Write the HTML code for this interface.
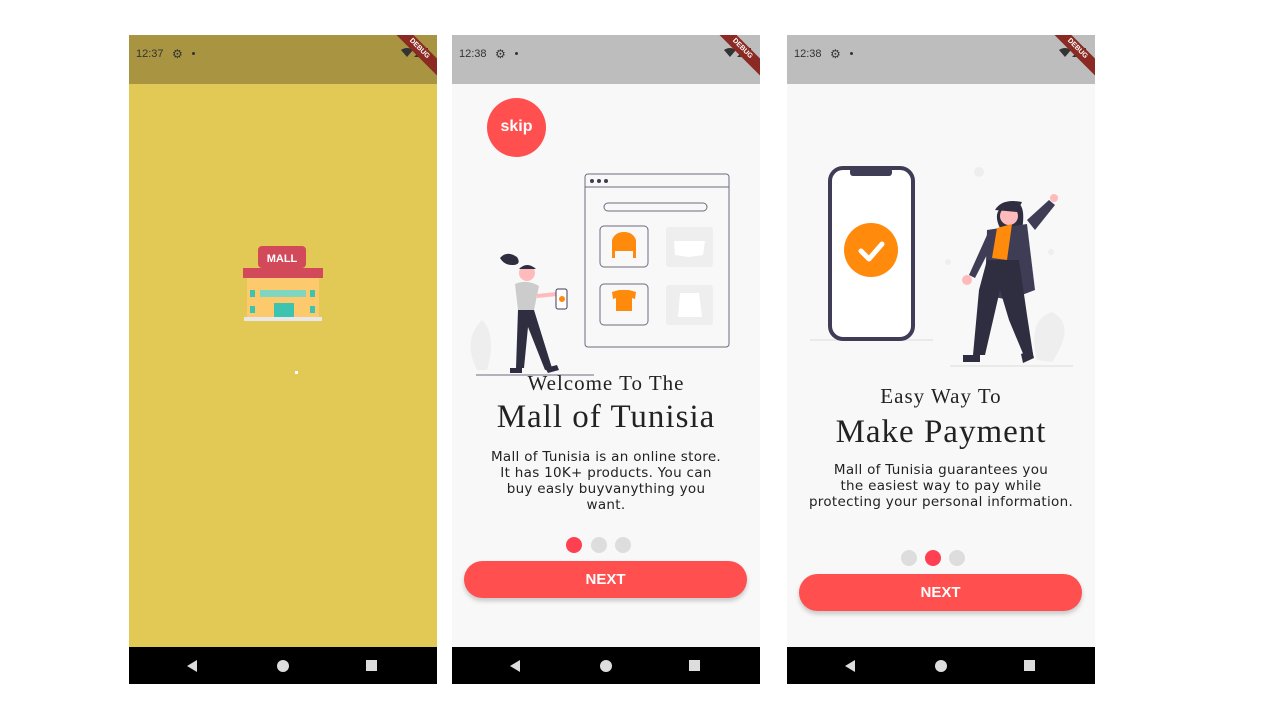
<!DOCTYPE html>
<html><head><meta charset="utf-8"><style>
*{margin:0;padding:0;box-sizing:border-box}
body{width:1280px;height:720px;background:#fff;position:relative;overflow:hidden;font-family:"Liberation Sans",sans-serif}
.ph{position:absolute;top:35px;width:308px;height:649px;background:#f8f8f8;overflow:hidden}
.sb{position:absolute;left:0;top:0;width:100%;height:49px;background:#bdbdbd;color:#333;font-size:11px}
.sb .t{position:absolute;left:7px;top:13px}
.sb .g{position:absolute;left:43px;top:12px;font-size:12px}
.sb .d{position:absolute;left:63px;top:17px;width:3px;height:3px;border-radius:50%;background:#333}
.sb .ic{position:absolute;right:8px;top:13px;width:28px;height:10px}
.rib{position:absolute;right:-22px;top:8px;width:80px;height:12px;background:#8b2a23;transform:rotate(45deg);color:#fff;font-size:7px;font-weight:bold;text-align:center;line-height:12px}
.nb{position:absolute;left:0;bottom:0;width:100%;height:37px;background:#000}
.nb .a{position:absolute;left:58px;top:13px;width:0;height:0;border-top:6px solid transparent;border-bottom:6px solid transparent;border-right:10px solid #ddd}
.nb .c{position:absolute;left:148px;top:13px;width:12px;height:12px;border-radius:50%;background:#ddd}
.nb .s{position:absolute;left:237px;top:13px;width:11px;height:11px;background:#ddd}
.ser{font-family:"Liberation Serif",serif;color:#222;text-align:center;position:absolute;left:0;width:100%;letter-spacing:1px}
.body{font-family:"DejaVu Sans",sans-serif;font-size:13.5px;color:#222;text-align:center;position:absolute;left:0;width:100%;line-height:16px;letter-spacing:0.3px}
.dot{position:absolute;width:16px;height:16px;border-radius:50%;background:#ddd}
.btn{position:absolute;left:12px;width:283px;height:37px;border-radius:19px;background:#ff4f4f;color:#fff;font-weight:bold;font-size:15px;text-align:center;line-height:37px;box-shadow:0 3px 5px rgba(0,0,0,.2)}
</style></head><body>

<!-- phone 1 -->
<div class="ph" style="left:129px;background:#e2c955">
 <div class="sb" style="background:#a99541"><span class="t">12:37</span><span class="g">⚙</span><span class="d"></span>
 <svg class="ic" viewBox="0 0 28 10"><path d="M0 2 Q6 -2 12 2 L6 9Z" fill="#333"/><path d="M13 9 L22 0 L22 9Z" fill="#333"/><rect x="23" y="0" width="4" height="10" fill="#333"/></svg></div>
 <div class="rib">DEBUG</div>
 <svg style="position:absolute;left:113px;top:208px" width="82" height="80" viewBox="0 0 82 80">
  <rect x="16" y="3" width="48" height="22" rx="4" fill="#d24a5a"/>
  <text x="40" y="19" font-family="Liberation Sans" font-weight="bold" font-size="11" fill="#fff" text-anchor="middle">MALL</text>
  <rect x="5" y="33" width="72" height="41" fill="#fcc96c"/>
  <rect x="1" y="25" width="80" height="10" fill="#d24a5a"/>
  <rect x="18" y="47" width="46" height="7" fill="#7fd6c0"/>
  <rect x="8" y="47" width="5" height="7" fill="#3cc4b0"/><rect x="68" y="47" width="5" height="7" fill="#3cc4b0"/>
  <rect x="8" y="63" width="5" height="7" fill="#3cc4b0"/><rect x="68" y="63" width="5" height="7" fill="#3cc4b0"/>
  <rect x="32" y="60" width="20" height="14" fill="#3cc4b0"/>
  <rect x="2" y="74" width="78" height="4" fill="#e8e8e8"/>
 </svg>
 <div style="position:absolute;left:166px;top:336px;width:3px;height:3px;background:#fff"></div>
 <div class="nb"><i class="a"></i><i class="c"></i><i class="s"></i></div>
</div>

<!-- phone 2 -->
<div class="ph" style="left:452px">
 <div class="sb"><span class="t">12:38</span><span class="g">⚙</span><span class="d"></span>
 <svg class="ic" viewBox="0 0 28 10"><path d="M0 2 Q6 -2 12 2 L6 9Z" fill="#333"/><path d="M13 9 L22 0 L22 9Z" fill="#333"/><rect x="23" y="0" width="4" height="10" fill="#333"/></svg></div>
 <div class="rib">DEBUG</div>
 <div style="position:absolute;left:35px;top:63px;width:59px;height:59px;border-radius:50%;background:#ff4f4f;color:#fff;font-weight:bold;font-size:16px;text-align:center;line-height:57px">skip</div>
 <svg style="position:absolute;left:0;top:130px" width="308" height="215" viewBox="0 0 308 215">
  <path d="M25 205 Q10 175 30 155 Q45 170 35 205Z" fill="#eee"/>
  <rect x="133" y="9" width="144" height="173" rx="3" fill="none" stroke="#6b6a80" stroke-width="1"/>
  <line x1="133" y1="22" x2="277" y2="22" stroke="#6b6a80"/>
  <circle cx="140" cy="16" r="2" fill="#3f3d56"/><circle cx="147" cy="16" r="2" fill="#3f3d56"/><circle cx="154" cy="16" r="2" fill="#3f3d56"/>
  <rect x="152" y="38" width="103" height="8" rx="4" fill="none" stroke="#6b6a80"/>
  <rect x="148" y="61" width="48" height="41" rx="4" fill="none" stroke="#6b6a80"/>
  <rect x="214" y="62" width="47" height="40" rx="3" fill="#eee"/>
  <rect x="148" y="119" width="48" height="41" rx="4" fill="none" stroke="#6b6a80"/>
  <rect x="214" y="120" width="47" height="40" rx="3" fill="#eee"/>
  <path d="M160 93 L160 75 Q163 67 172 67 Q181 67 184 75 L184 93 L181 93 L181 86 L163 86 L163 93Z" fill="#ff8a0c"/>
  <path d="M160 127 L167 125 L177 125 L184 127 L183 134 L180 133 L180 146 L164 146 L164 133 L161 134Z" fill="#ff8a0c"/>
  <path d="M222 76 L253 76 L251 90 L237 92 L223 90Z" fill="#fff"/>
  <path d="M228 128 L247 128 L250 152 L226 152Z" fill="#fff"/>
  <path d="M48 93 Q55 85 65 92 Q70 100 60 100 Q52 100 48 93Z" fill="#2f2e41"/>
  <circle cx="75" cy="108" r="8" fill="#fbb"/>
  <path d="M67 104 Q75 96 84 104Z" fill="#2f2e41"/>
  <path d="M63 119 Q75 114 87 121 L82 145 L66 145Z" fill="#ccc"/>
  <path d="M85 129 L105 127 L105 131 L85 133Z" fill="#fbb"/>
  <rect x="104" y="124" width="11" height="20" rx="2" fill="#fff" stroke="#3f3d56"/>
  <circle cx="110" cy="134" r="3" fill="#ff8a0c"/>
  <path d="M66 145 L82 145 L100 203 L93 205 L76 162 L72 203 L64 203Z" fill="#2f2e41"/>
  <path d="M58 203 L70 203 L70 208 L58 208Z M93 203 L105 200 L107 205 L96 208Z" fill="#2f2e41"/>
  <line x1="24" y1="210" x2="142" y2="210" stroke="#6b6a80"/>
 </svg>
 <div class="ser" style="top:336px;font-size:21px">Welcome To The</div>
 <div class="ser" style="top:364px;font-size:33px">Mall of Tunisia</div>
 <div class="body" style="top:414px">Mall of Tunisia is an online store.<br>It has 10K+ products. You can<br>buy easly buyvanything you<br>want.</div>
 <div class="dot" style="left:114px;top:502px;background:#ff4052"></div>
 <div class="dot" style="left:139px;top:502px"></div>
 <div class="dot" style="left:163px;top:502px"></div>
 <div class="btn" style="top:526px">NEXT</div>
 <div class="nb"><i class="a"></i><i class="c"></i><i class="s"></i></div>
</div>

<!-- phone 3 -->
<div class="ph" style="left:787px">
 <div class="sb"><span class="t">12:38</span><span class="g">⚙</span><span class="d"></span>
 <svg class="ic" viewBox="0 0 28 10"><path d="M0 2 Q6 -2 12 2 L6 9Z" fill="#333"/><path d="M13 9 L22 0 L22 9Z" fill="#333"/><rect x="23" y="0" width="4" height="10" fill="#333"/></svg></div>
 <div class="rib">DEBUG</div>
 <svg style="position:absolute;left:0;top:105px" width="308" height="240" viewBox="0 0 308 240">
  <line x1="23" y1="200" x2="146" y2="200" stroke="#ddd"/>
  <line x1="163" y1="226" x2="286" y2="226" stroke="#ddd"/>
  <rect x="43" y="28" width="83" height="171" rx="13" fill="#fff" stroke="#3f3d56" stroke-width="4"/>
  <rect x="63" y="28" width="42" height="8" rx="3" fill="#3f3d56"/>
  <rect x="125" y="67" width="3" height="20" fill="#3f3d56"/>
  <circle cx="84" cy="110" r="27" fill="#ff8a0c"/>
  <path d="M74 111 L82 119 L95 104" fill="none" stroke="#fff" stroke-width="5" stroke-linecap="round" stroke-linejoin="round"/>
  <circle cx="192" cy="32" r="5" fill="#eee"/><circle cx="161" cy="122" r="3" fill="#eee"/><circle cx="264" cy="112" r="3" fill="#eee"/>
  <path d="M250 220 Q240 180 265 172 Q290 185 265 222Z" fill="#eee"/>
  <path d="M213 88 Q203 68 225 62 Q240 60 235 90Z" fill="#2f2e41"/>
  <circle cx="222" cy="76" r="9" fill="#fbb"/>
  <path d="M208 70 Q215 58 235 62 L230 72Z" fill="#2f2e41"/>
  <path d="M240 80 L262 60 L268 65 L248 90Z" fill="#3f3d56"/>
  <circle cx="267" cy="58" r="4" fill="#fbb"/>
  <path d="M200 90 L240 84 L248 150 L222 160 L198 155Z" fill="#3f3d56"/>
  <path d="M210 88 L225 84 L220 120 L205 118Z" fill="#ff8a0c"/>
  <path d="M200 95 L182 135 L188 138 L205 105Z" fill="#3f3d56"/>
  <circle cx="180" cy="140" r="5" fill="#fbb"/>
  <path d="M200 120 L232 120 L240 175 L246 214 L237 216 L222 180 L213 150 L198 215 L186 215 L192 150Z" fill="#2f2e41"/>
  <path d="M176 215 L193 215 L193 222 L176 222Z M234 214 L245 210 L247 218 L236 223Z" fill="#2f2e41"/>
 </svg>
 <div class="ser" style="top:349px;font-size:21px">Easy Way To</div>
 <div class="ser" style="top:379px;font-size:33px">Make Payment</div>
 <div class="body" style="top:427px">Mall of Tunisia guarantees you<br>the easiest way to pay while<br>protecting your personal information.</div>
 <div class="dot" style="left:114px;top:515px"></div>
 <div class="dot" style="left:138px;top:515px;background:#ff4052"></div>
 <div class="dot" style="left:162px;top:515px"></div>
 <div class="btn" style="top:539px">NEXT</div>
 <div class="nb"><i class="a"></i><i class="c"></i><i class="s"></i></div>
</div>
</body></html>
